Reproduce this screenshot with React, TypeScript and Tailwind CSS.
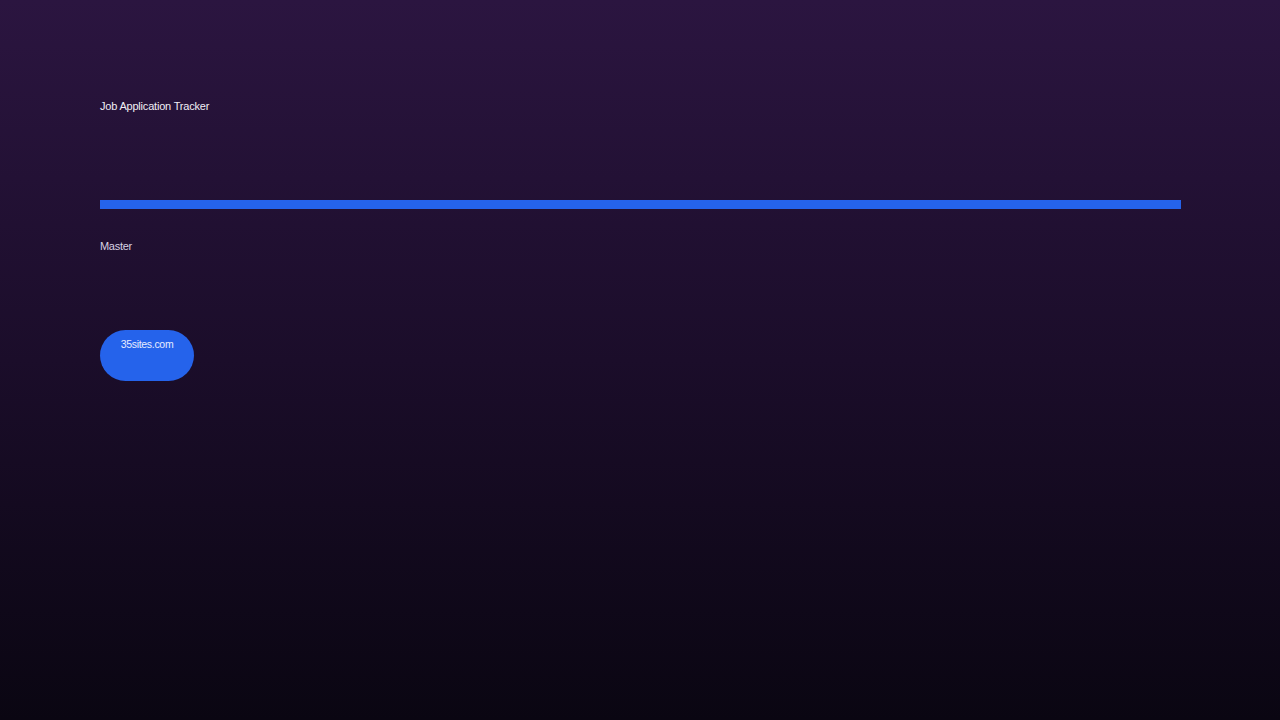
export default function App() {
  return (
    <div
      className="min-h-screen w-full bg-gradient-to-b from-[#2b1540] via-[#1b0d2a] to-[#0a0612] text-white"
      style={{ fontFamily: '"Liberation Sans", Arial, sans-serif' }}
    >
      <main className="px-[100px] pt-[98px]">
        {/* Title */}
        <h1 className="text-[11px] leading-[16px] font-normal tracking-[-0.2px] text-[#f1eef5]">
          Job Application Tracker
        </h1>

        {/* Progress bar */}
        <div className="mt-[86px] h-[9px] w-[1081px] bg-[#2563eb]" />

        {/* Stage */}
        <p className="mt-[29px] text-[11px] leading-[16px] tracking-[-0.3px] text-[#d8d2e2]">Master</p>

        {/* Site link */}
        <button className="mt-[76px] flex h-[51px] w-[94px] items-start justify-center rounded-full bg-[#2563eb] pt-[7px] text-[10.5px] leading-[14px] tracking-[-0.3px] text-[#e6ecff]">
          35sites.com
        </button>
      </main>
    </div>
  );
}
